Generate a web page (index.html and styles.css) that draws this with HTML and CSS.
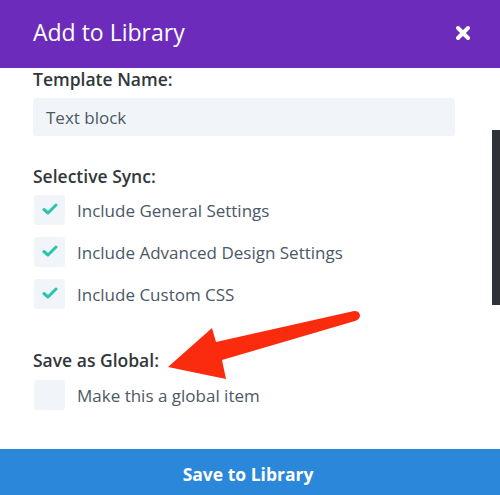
FILE: index.html
```html
<!DOCTYPE html>
<html>
<head>
<meta charset="utf-8">
<link rel="stylesheet" href="styles.css">
</head>
<body>
<div class="modal">
  <div class="header">
    <h1 class="title">Add to Library</h1>
    <svg class="close" width="16" height="16" viewBox="0 0 16 16"><path d="M3 3 L13 13 M13 3 L3 13" stroke="#fff" stroke-width="4" stroke-linecap="round"/></svg>
  </div>
  <div class="content">
    <div class="label">Template Name:</div>
    <div class="input">Text block</div>
    <div class="label section">Selective Sync:</div>
    <div class="options">
      <div class="option"><span class="box"><svg width="16" height="12" viewBox="0 0 16 12"><path d="M2 6.5 L6 10 L14 2" fill="none" stroke="#29c4a9" stroke-width="3" stroke-linecap="round" stroke-linejoin="round"/></svg></span><span class="opt-text">Include General Settings</span></div>
      <div class="option"><span class="box"><svg width="16" height="12" viewBox="0 0 16 12"><path d="M2 6.5 L6 10 L14 2" fill="none" stroke="#29c4a9" stroke-width="3" stroke-linecap="round" stroke-linejoin="round"/></svg></span><span class="opt-text">Include Advanced Design Settings</span></div>
      <div class="option"><span class="box"><svg width="16" height="12" viewBox="0 0 16 12"><path d="M2 6.5 L6 10 L14 2" fill="none" stroke="#29c4a9" stroke-width="3" stroke-linecap="round" stroke-linejoin="round"/></svg></span><span class="opt-text">Include Custom CSS</span></div>
    </div>
    <div class="label section2">Save as Global:</div>
    <div class="options single">
      <div class="option"><span class="box"></span><span class="opt-text">Make this a global item</span></div>
    </div>
  </div>
  <button class="save">Save to Library</button>
  <div class="scrollbar"></div>
  <svg class="arrow" width="500" height="495" viewBox="0 0 500 495">
    <path d="M168 367 L212 328 L216 342 L354 311 Q360 311 360 316 Q359 320 355 321 L222 360 L226 379 Z" fill="#fa2c0d"/>
  </svg>
</div>
</body>
</html>
```

FILE: styles.css
```css
* { box-sizing: border-box; }
html, body { margin: 0; padding: 0; background: #fff; }
body { font-family: "Open Sans", "Noto Sans", sans-serif; }
.modal { position: relative; width: 500px; height: 495px; overflow: hidden; display: flex; flex-direction: column; }
.header { height: 68px; background: #6c2bbb; display: flex; align-items: center; justify-content: space-between; padding: 0 29px 3px 33px; flex-shrink: 0; }
.title { margin: 0; color: #fff; font-size: 23px; font-weight: 500; line-height: 1; }
.close { display: block; }
.content { padding: 0 45px 0 33px; flex: 1; }
.label { font-size: 17.5px; font-weight: 600; color: #32373c; line-height: 22px; }
.input { margin-top: 8px; height: 38px; background: #f1f5f9; border-radius: 3px; padding: 0 13px; display: flex; align-items: center; font-size: 17px; font-weight: 500; color: #4c5866; }
.section { margin-top: 29px; }
.section2 { margin-top: 40px; }
.options { margin-top: 8px; display: flex; flex-direction: column; gap: 12px; }
.options.single { margin-top: 9px; }
.option { display: flex; align-items: center; height: 30px; }
.box { width: 31px; height: 30px; background: #f1f5f9; border-radius: 3px; display: flex; align-items: center; justify-content: center; padding-bottom: 3px; margin-left: 1px; }
.opt-text { margin-left: 12px; font-size: 17px; font-weight: 500; color: #4c5866; }
.save { flex-shrink: 0; height: 46px; border: 0; background: #2b87da; color: #fff; font-family: "Open Sans", "Noto Sans", sans-serif; font-size: 17.5px; font-weight: 700; width: 100%; margin: 0; padding: 4px 4px 0 0; }
.scrollbar { position: absolute; right: 0; top: 130px; width: 8px; height: 175px; background: #2f3337; }
.arrow { position: absolute; left: 0; top: 0; pointer-events: none; }
```
